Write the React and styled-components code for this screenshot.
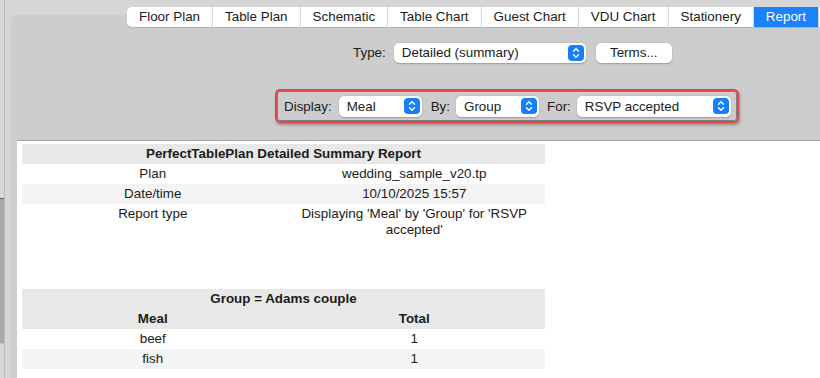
import React from "react";
import styled, { createGlobalStyle } from "styled-components";

const Global = createGlobalStyle`
  html, body { margin: 0; padding: 0; }
  body {
    width: 820px; height: 378px; overflow: hidden;
    font-family: "Liberation Sans", Arial, sans-serif;
    font-size: 13.4px; color: #1b1b1b;
    -webkit-font-smoothing: antialiased;
  }
`;

const Root = styled.div`
  display: flex;
  width: 820px;
  height: 378px;
  overflow: hidden;
  background: #d6d6d6;
`;

const Sidebar = styled.div`
  width: 4px;
  display: flex;
  flex-direction: column;
  border-right: 1px solid #bcbcbc;
  flex-shrink: 0;
`;

const SideSeg = styled.div`
  height: ${(p) => (p.$h ? `${p.$h}px` : "auto")};
  flex: ${(p) => (p.$h ? "none" : "1")};
  background: ${(p) => p.$bg};
  border-top: ${(p) => (p.$line ? `1px solid ${p.$line}` : "none")};
`;

const Main = styled.div`
  flex: 1;
  display: flex;
  flex-direction: column;
  padding: 7px 0 0 6px;
  min-width: 0;
  overflow: hidden;
`;

const TabBar = styled.div`
  display: flex;
  margin-left: 116px;
  position: relative;
  z-index: 1;
  flex-shrink: 0;
  white-space: nowrap;
`;

const Tab = styled.div`
  height: 20px;
  line-height: 20px;
  padding: 0 12px;
  flex-shrink: 0;
  background: ${(p) => (p.$active ? "#1a82fb" : "#ffffff")};
  color: ${(p) => (p.$active ? "#ffffff" : "#1b1b1b")};
  border-left: ${(p) => (p.$first ? "none" : "1px solid #d9d9d9")};
  border-radius: ${(p) => (p.$first ? "5px 0 0 5px" : "0")};
  box-shadow: 0 0.5px 1px rgba(0, 0, 0, 0.15);
  min-width: ${(p) => (p.$filler ? "40px" : "0")};
`;

const Pane = styled.div`
  flex: 1;
  margin-top: -12px;
  background: #cdcdcd;
  border-radius: 6px 0 0 0;
  display: flex;
  flex-direction: column;
  padding-top: 27px;
  min-height: 0;
`;

const TypeRow = styled.div`
  display: flex;
  align-items: center;
  margin-left: 342px;
  height: 21px;
`;

const Label = styled.span`
  margin-right: ${(p) => p.$mr || 8}px;
  white-space: nowrap;
`;

const Select = styled.div`
  width: ${(p) => p.$w}px;
  height: ${(p) => p.$h || 21}px;
  box-sizing: border-box;
  background: #ffffff;
  border-radius: 5px;
  box-shadow: 0 0.5px 1.5px rgba(0, 0, 0, 0.25);
  display: flex;
  align-items: center;
  justify-content: space-between;
  padding: 0 2px 0 8px;
  margin-right: ${(p) => p.$mr || 0}px;
  flex-shrink: 0;
`;

const Stepper = styled.div`
  width: 16px;
  height: 16px;
  border-radius: 4px;
  background: #1580fa;
  display: flex;
  align-items: center;
  justify-content: center;
`;

const Button = styled.div`
  width: 76px;
  height: 20px;
  margin-left: 10px;
  background: #ffffff;
  border-radius: 5px;
  box-shadow: 0 0.5px 1.5px rgba(0, 0, 0, 0.25);
  display: flex;
  align-items: center;
  justify-content: center;
`;

const GroupBox = styled.div`
  margin: 26px 0 0 264px;
  width: 464px;
  height: 34px;
  box-sizing: border-box;
  border: 2px solid #e4474b;
  border-radius: 5px;
  box-shadow: inset 0 0 0 1px #7d7d7d, 1px 2px 3px rgba(0, 0, 0, 0.35);
  display: flex;
  align-items: center;
  padding-left: 7px;
`;

const ReportArea = styled.div`
  flex: 1;
  margin: 17px 0 0 6px;
  border-top: 1px solid #a2a2a2;
  background: #ffffff;
  padding: 3px 0 0 5px;
`;

const Table = styled.div`
  width: 523px;
  display: grid;
  grid-template-columns: 1fr 1fr;
  margin-bottom: ${(p) => p.$mb || 0}px;
`;

const Row = styled.div`
  display: contents;
`;

const Cell = styled.div`
  background: ${(p) => p.$bg || "#ffffff"};
  text-align: center;
  line-height: 16px;
  padding: 2px 4px;
  font-weight: ${(p) => (p.$bold ? 700 : 400)};
  grid-column: ${(p) => (p.$span ? "1 / span 2" : "auto")};
`;

function StepIcon() {
  return (
    <Stepper>
      <svg width="10" height="14" viewBox="0 0 10 14" fill="none">
        <path d="M2.5 5.2 L5 2.7 L7.5 5.2" stroke="#fff" strokeWidth="1.5" strokeLinecap="round" strokeLinejoin="round" />
        <path d="M2.5 8.8 L5 11.3 L7.5 8.8" stroke="#fff" strokeWidth="1.5" strokeLinecap="round" strokeLinejoin="round" />
      </svg>
    </Stepper>
  );
}

const tabs = ["Floor Plan", "Table Plan", "Schematic", "Table Chart", "Guest Chart", "VDU Chart", "Stationery", "Report"];

export default function App() {
  return (
    <>
      <Global />
      <Root>
        <Sidebar>
          <SideSeg $h={198} $bg="#d8d8d8" />
          <SideSeg $h={144} $bg="#a9a9a9" $line="#5e5e5e" />
          <SideSeg $bg="#d6d6d6" $line="#c4c4c4" />
        </Sidebar>
        <Main>
          <TabBar>
            {tabs.map((t, i) => (
              <Tab key={t} $first={i === 0} $active={t === "Report"}>
                {t}
              </Tab>
            ))}
            <Tab $filler />
          </TabBar>
          <Pane>
            <TypeRow>
              <Label>Type:</Label>
              <Select $w={192} $h={20}>
                <span>Detailed (summary)</span>
                <StepIcon />
              </Select>
              <Button>Terms...</Button>
            </TypeRow>
            <GroupBox>
              <Label $mr={7}>Display:</Label>
              <Select $w={83} $mr={9}>
                <span>Meal</span>
                <StepIcon />
              </Select>
              <Label $mr={6}>By:</Label>
              <Select $w={83} $mr={8}>
                <span>Group</span>
                <StepIcon />
              </Select>
              <Label $mr={6}>For:</Label>
              <Select $w={154}>
                <span>RSVP accepted</span>
                <StepIcon />
              </Select>
            </GroupBox>
            <ReportArea>
              <Table $mb={49}>
                <Cell $span $bold $bg="#e8e8e8">PerfectTablePlan Detailed Summary Report</Cell>
                <Row>
                  <Cell>Plan</Cell>
                  <Cell>wedding_sample_v20.tp</Cell>
                </Row>
                <Row>
                  <Cell $bg="#f4f4f4">Date/time</Cell>
                  <Cell $bg="#f4f4f4">10/10/2025 15:57</Cell>
                </Row>
                <Row>
                  <Cell>Report type</Cell>
                  <Cell>Displaying 'Meal' by 'Group' for 'RSVP accepted'</Cell>
                </Row>
              </Table>
              <Table>
                <Cell $span $bold $bg="#e8e8e8">Group = Adams couple</Cell>
                <Row>
                  <Cell $bold $bg="#e8e8e8">Meal</Cell>
                  <Cell $bold $bg="#e8e8e8">Total</Cell>
                </Row>
                <Row>
                  <Cell>beef</Cell>
                  <Cell>1</Cell>
                </Row>
                <Row>
                  <Cell $bg="#f4f4f4">fish</Cell>
                  <Cell $bg="#f4f4f4">1</Cell>
                </Row>
              </Table>
            </ReportArea>
          </Pane>
        </Main>
      </Root>
    </>
  );
}
